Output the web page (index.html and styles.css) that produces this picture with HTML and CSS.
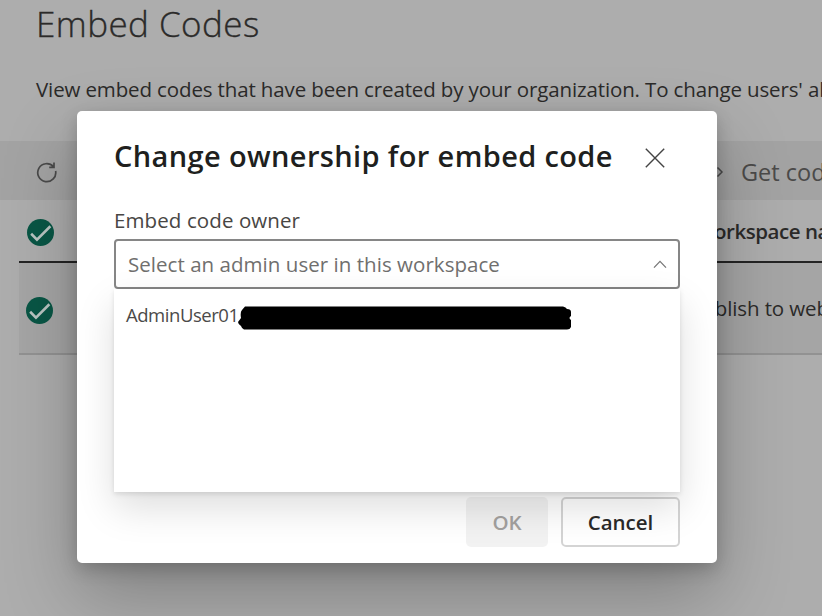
FILE: index.html
```html
<!DOCTYPE html>
<html lang="en">
<head>
<meta charset="utf-8">
<title>Embed Codes</title>
<link rel="stylesheet" href="styles.css">
</head>
<body>
<main class="page">
  <h1 class="page-title">Embed Codes</h1>
  <p class="page-intro">View embed codes that have been created by your organization. To change users' ability</p>
  <div class="toolbar">
    <svg class="refresh" viewBox="0 0 22 22"><path d="M17.400 5.600A9 9 0 1 0 19.600 10M18 1.600V6.400H13.200"/></svg>
    <div class="get-code">
      <svg class="chevron" viewBox="0 0 8 12"><path d="M1.5 1.5 6 6 1.5 10.5"/></svg>
      <span>Get code</span>
    </div>
  </div>
  <div class="table">
    <div class="row head">
      <svg class="check" viewBox="0 0 26 26"><circle cx="13" cy="13" r="13"/><path d="M4 14.2 9.6 19.8 22.500 7"/></svg>
      <span class="cell">Workspace name</span>
    </div>
    <div class="row item">
      <svg class="check" viewBox="0 0 26 26"><circle cx="13" cy="13" r="13"/><path d="M4 14.2 9.6 19.8 22.500 7"/></svg>
      <span class="cell">Publish to web</span>
    </div>
  </div>
</main>
<section class="dialog" role="dialog">
  <header class="dialog-head">
    <h2 class="dialog-title">Change ownership for embed code</h2>
    <svg class="close" viewBox="0 0 20 20"><path d="M.8.8 19.2 19.2M19.2.8.8 19.2"/></svg>
  </header>
  <div class="label">Embed code owner</div>
  <div class="select">
    <span class="placeholder">Select an admin user in this workspace</span>
    <svg class="caret" viewBox="0 0 14 9"><path d="M1 7.6 7 1.4 13 7.6"/></svg>
    <div class="menu">
      <div class="option"><span class="user">AdminUser01</span><svg class="redaction" viewBox="0 0 333 24"><path d="M7 .5H325Q328 1 329 3Q333 3 333 6V10Q330 12 333 14V21Q332 23.500 329 23.500H6Q4 23 3 20Q0 18 0 16L3 12Q2 6 4 4Z"/></svg></div>
    </div>
  </div>
  <footer class="actions">
    <button class="btn ok" disabled>OK</button>
    <button class="btn cancel">Cancel</button>
  </footer>
</section>
</body>
</html>
```
FILE: styles.css
```css
* { box-sizing: border-box; }
body {
  margin: 0;
  width: 822px;
  height: 616px;
  overflow: hidden;
  position: relative;
  background: #adadad;
  color: #2b2a29;
  font-family: "Open Sans", "Noto Sans", sans-serif;
  white-space: nowrap;
}
.page { height: 616px; overflow: hidden; }
.page-title {
  margin: 0;
  padding: 0 0 0 36px;
  height: 50px;
  font-size: 35px;
  line-height: 48px;
  font-weight: 300;
  -webkit-text-stroke: .35px #2b2a29;
  letter-spacing: .45px;
}
.page-intro {
  margin: 0;
  padding: 24px 0 0 36px;
  height: 91px;
  font-size: 20.5px;
  line-height: 30px;
  letter-spacing: -.13px;
}
.toolbar {
  display: flex;
  align-items: center;
  height: 59px;
  padding-left: 36px;
  background: #a3a3a3;
  color: #4b4a49;
}
.refresh { flex: none; width: 22px; height: 22px; margin-top: 3px; fill: none; stroke: #4a4a4a; stroke-width: 1.7; }
.get-code {
  display: flex;
  align-items: center;
  gap: 17px;
  margin-left: 658px;
  padding-top: 3px;
  font-size: 23.5px;
}
.chevron { flex: none; width: 8px; height: 12px; fill: none; stroke: #4a4a4a; stroke-width: 1.5; }
.table { margin-left: 19px; }
.row { display: flex; align-items: center; font-size: 20.5px; }
.head { height: 63px; padding: 4px 0 0 8px; border-bottom: 2px solid #242424; font-weight: 600; }
.item { height: 92px; padding: 3px 0 0 7px; border-bottom: 2px solid #929292; background: #a5a5a5; }
.check { flex: none; width: 27px; height: 27px; fill: #095645; }
.check path { fill: none; stroke: #b9c4c1; stroke-width: 2.5; }
.head .cell { margin: -3px 0 0 641px; letter-spacing: -.45px; }
.item .check { margin-top: 2px; }
.item .cell { margin: -3px 0 0 637px; letter-spacing: -.1px; }
.dialog {
  position: absolute;
  left: 77px;
  top: 111px;
  width: 640px;
  height: 452px;
  padding: 25px 37px 16px;
  border-radius: 5px;
  background: #fff;
  box-shadow: 0 32px 72px rgba(0,0,0,.26), 0 6px 18px rgba(0,0,0,.2);
  display: flex;
  flex-direction: column;
}
.dialog-head { display: flex; align-items: center; justify-content: space-between; height: 40px; padding-right: 15px; }
.dialog-title { margin: 0; font-size: 29px; line-height: 40px; font-weight: 600; letter-spacing: .37px; color: #201f1e; }
.close { flex: none; width: 20px; height: 20px; margin-top: 3px; fill: none; stroke: #444; stroke-width: 1.4; }
.label { margin-top: 29px; height: 34px; font-size: 20.5px; line-height: 30px; letter-spacing: .1px; color: #484644; }
.select {
  position: relative;
  display: flex;
  align-items: center;
  justify-content: space-between;
  height: 50px;
  padding: 0 11px 0 12px;
  border: 2px solid #868686;
  border-radius: 4px;
}
.placeholder { margin-top: -1px; font-size: 20.5px; letter-spacing: .04px; color: #706f6e; }
.caret { width: 14px; height: 9px; fill: none; stroke: #777; stroke-width: 1.3; }
.menu {
  position: absolute;
  left: -2px;
  top: 48px;
  width: 566px;
  height: 203px;
  padding: 14px 12px;
  background: #fff;
  box-shadow: 0 16px 36px rgba(0,0,0,.132), 0 2px 5px rgba(0,0,0,.11);
}
.option { display: flex; align-items: center; height: 24px; font-size: 18.5px; color: #4b4a49; }
.user { width: 112px; margin-top: -1px; letter-spacing: -.45px; }
.redaction { width: 333px; height: 24px; margin-top: 6px; flex: none; fill: #000; }
.actions { display: flex; justify-content: flex-end; gap: 13px; margin-top: auto; }
.btn { height: 50px; padding: 0; border-radius: 5px; font: 600 20.5px "Open Sans", "Noto Sans", sans-serif; }
.ok { width: 82px; border: 0; background: rgba(0,0,0,.05); color: #a3a19f; }
.cancel { width: 119px; border: 2px solid rgba(0,0,0,.17); background: transparent; color: #2b2a29; }
```
